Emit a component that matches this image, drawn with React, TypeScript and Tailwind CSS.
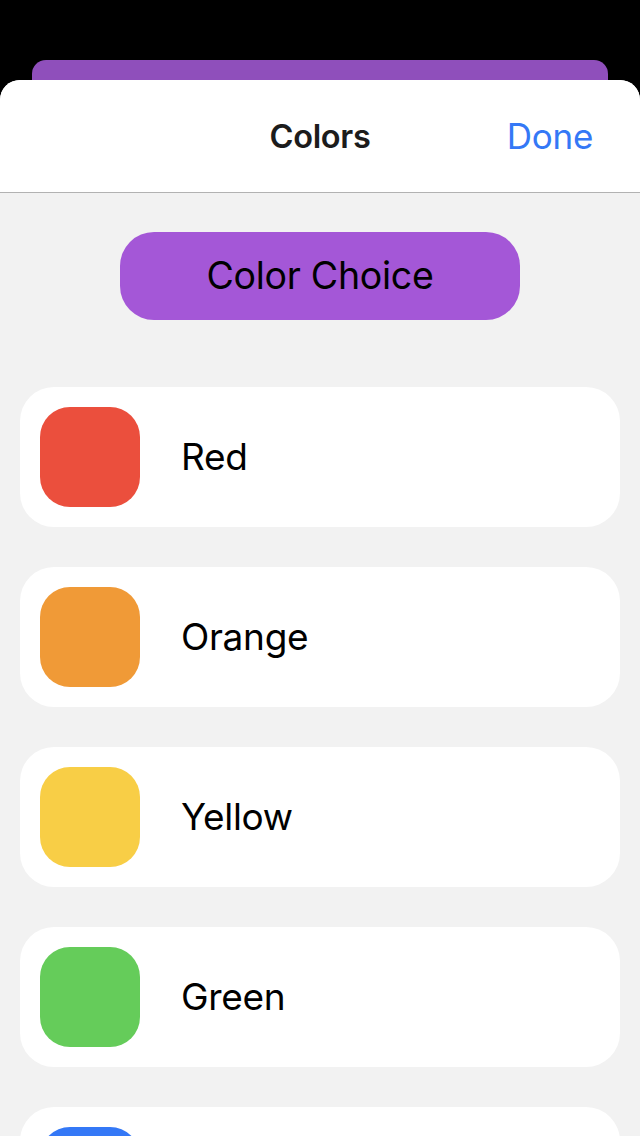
import React from "react";

const colors = [
  { name: "Red", c: "bg-[#eb4f3d]" },
  { name: "Orange", c: "bg-[#f09a37]" },
  { name: "Yellow", c: "bg-[#f8ce46]" },
  { name: "Green", c: "bg-[#65cc5a]" },
  { name: "Blue", c: "bg-[#3478f6]" },
];

export default function App() {
  return (
    <div
      className="w-[640px] h-[1136px] bg-black overflow-hidden flex flex-col"
      style={{ fontFamily: 'Inter, "Noto Sans", sans-serif' }}
    >
      <div className="h-[60px] shrink-0" />
      <div className="relative shrink-0 h-[20px] mx-[32px] bg-[#8f4fbb] rounded-t-[14px]" />
      <div className="flex-1 bg-[#f2f2f2] rounded-t-[20px] overflow-hidden flex flex-col">
        <div className="h-[113px] shrink-0 bg-white border-b border-[#b2b2b2] relative flex items-center justify-center">
          <span className="text-[32.5px] font-semibold text-[#1c1c1c] tracking-[-0.3px] mt-[3px]">Colors</span>
          <span className="absolute right-[47px] top-[36px] text-[35px] leading-[40px] text-[#3478f6] tracking-[-0.3px]">Done</span>
        </div>
        <div className="flex justify-center pt-[39px]">
          <div className="w-[400px] h-[88px] rounded-[34px] bg-[#a457d7] flex items-center justify-center">
            <span className="text-[37.5px] text-black tracking-[-0.3px] mt-[1px]">Color Choice</span>
          </div>
        </div>
        <div className="flex flex-col gap-[40px] px-[20px] pt-[67px]">
          {colors.map((col) => (
            <div key={col.name} className="h-[140px] bg-white rounded-[34px] flex items-center px-[20px] shrink-0">
              <div className={`w-[100px] h-[100px] rounded-[30px] ${col.c}`} />
              <span className="ml-[41px] text-[37px] text-black tracking-[-0.3px]">{col.name}</span>
            </div>
          ))}
        </div>
      </div>
    </div>
  );
}
